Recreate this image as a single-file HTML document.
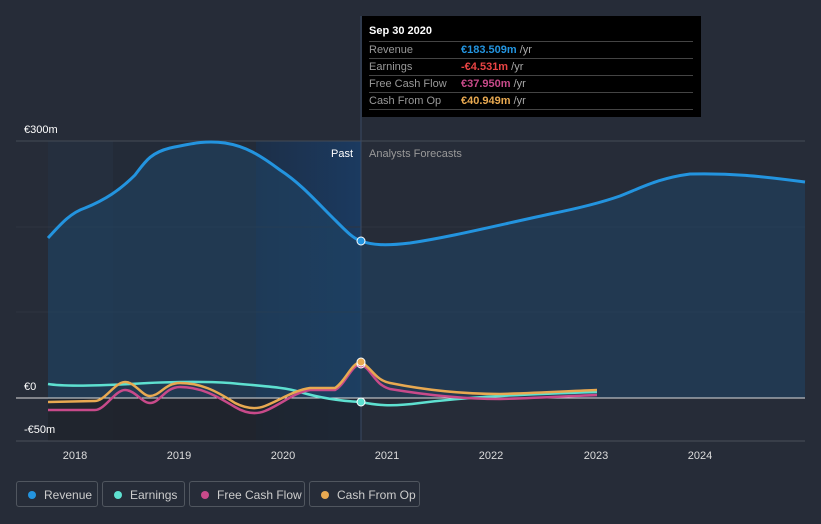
<!DOCTYPE html><html><head><style>
body{margin:0;width:821px;height:524px;background:#262c38;font-family:"Liberation Sans",sans-serif;overflow:hidden;position:relative}
.tt{position:absolute;left:362px;top:16px;width:339px;height:101px;background:#000;color:#fff;font-size:11px}
.tt .h{position:absolute;left:7px;top:9px;font-weight:bold;font-size:11px}
.row{position:absolute;left:7px;width:324px;border-top:1px solid #444;height:16px;line-height:17px;color:#999}
.row span{position:absolute;left:92px;font-weight:bold}
.row i{font-style:normal;color:#aaa;font-weight:normal}
.lg{position:absolute;top:481px;height:26px;border:1px solid #50565f;border-radius:3px;color:#ccc;font-size:12px;line-height:26px;box-sizing:border-box}
.lg b{position:absolute;left:11px;top:9px;width:8px;height:8px;border-radius:50%}
.lg span{position:absolute;left:27px}
</style></head><body>
<svg width="821" height="524" style="position:absolute;left:0;top:0" font-family="Liberation Sans" font-size="11">
<defs><linearGradient id="hb" x1="0" x2="1" y1="0" y2="0"><stop offset="0" stop-color="#1c2f48"/><stop offset="1" stop-color="#1b3a60"/></linearGradient></defs>
<rect x="48" y="141" width="208" height="300" fill="#252f3e"/>
<rect x="113" y="141" width="143" height="300" fill="#232b38"/>
<rect x="256" y="141" width="105" height="300" fill="url(#hb)"/>
<rect x="48" y="398" width="313" height="43" fill="#1f232b" opacity="0.8"/>
<line x1="16" y1="141" x2="805" y2="141" stroke="#444b56"/>
<line x1="16" y1="227" x2="805" y2="227" stroke="#2f3541"/>
<line x1="16" y1="312" x2="805" y2="312" stroke="#2f3541"/>
<line x1="16" y1="441" x2="805" y2="441" stroke="#4a505a"/>
<line x1="361" y1="16" x2="361" y2="441" stroke="#3a4a63"/>
<path d="M48,238 C60,225 70,213 85,208 C105,200 120,190 135,175 C145,162 150,153 170,148 C190,144 205,140 225,143 C245,146 260,155 280,170 C300,183 315,200 330,215 C345,230 352,238 361,241 C372,245 385,246 410,243 C450,237 490,227 550,214 C580,208 600,203 620,196 C645,186 660,178 690,174 C730,173 760,176 805,182 L805,398 L48,398Z" fill="#1f4263" opacity="0.6"/>
<path d="M48,238 C60,225 70,213 85,208 C105,200 120,190 135,175 C145,162 150,153 170,148 C190,144 205,140 225,143 C245,146 260,155 280,170 C300,183 315,200 330,215 C345,230 352,238 361,241 C372,245 385,246 410,243 C450,237 490,227 550,214 C580,208 600,203 620,196 C645,186 660,178 690,174 C730,173 760,176 805,182" fill="none" stroke="#2394df" stroke-width="3"/>
<line x1="16" y1="398" x2="805" y2="398" stroke="#ddd" stroke-width="1"/>
<path d="M48,384 C60,386 90,386 130,384 C160,382 200,381 230,383 C260,386 285,387 300,392 C320,398 340,401 361,402 C375,405 390,407 420,403 C460,398 500,395 597,392" fill="none" stroke="#5ee0d0" stroke-width="2.5"/>
<path d="M48,410 L95,410 C105,410 115,390 125,390 C135,390 142,403 150,403 C160,403 165,387 180,387 C200,387 215,395 235,407 C245,413 255,415 265,411 C280,405 295,392 310,390 L335,390 C345,385 352,364 361,364 C372,370 375,385 390,389 C420,394 460,399 500,399 C540,398 570,396 597,395" fill="none" stroke="#c84a8a" stroke-width="2.5"/>
<path d="M48,402 L95,401 C105,401 115,382 125,382 C135,382 142,396 150,396 C160,396 165,383 180,383 C200,383 215,390 235,403 C245,408 255,410 265,406 C280,400 295,390 310,388 L335,388 C345,382 352,362 361,362 C372,368 375,380 390,383 C420,389 460,394 500,394 C540,393 570,391 597,390" fill="none" stroke="#e8a951" stroke-width="2.5"/>
<circle cx="361" cy="241" r="4" fill="#2394df" stroke="#fff" stroke-width="1"/>
<circle cx="361" cy="402" r="4" fill="#5ee0d0" stroke="#fff" stroke-width="1"/>
<circle cx="361" cy="364" r="4" fill="#c84a8a" stroke="#fff" stroke-width="1"/>
<circle cx="361" cy="362" r="4" fill="#e8a951" stroke="#fff" stroke-width="1"/>
<text x="24" y="133" fill="#fff">€300m</text>
<text x="24" y="390" fill="#fff">€0</text>
<text x="24" y="433" fill="#fff">-€50m</text>
<text x="353" y="157" fill="#fff" text-anchor="end">Past</text>
<text x="369" y="157" fill="#999">Analysts Forecasts</text>
<g fill="#ddd" text-anchor="middle"><text x="75" y="459">2018</text><text x="179" y="459">2019</text><text x="283" y="459">2020</text><text x="387" y="459">2021</text><text x="491" y="459">2022</text><text x="596" y="459">2023</text><text x="700" y="459">2024</text></g>
</svg>
<div class="tt"><div class="h">Sep 30 2020</div>
<div class="row" style="top:25px">Revenue<span style="color:#2394df">€183.509m <i>/yr</i></span></div>
<div class="row" style="top:42px">Earnings<span style="color:#e84444">-€4.531m <i>/yr</i></span></div>
<div class="row" style="top:59px">Free Cash Flow<span style="color:#c84a8a">€37.950m <i>/yr</i></span></div>
<div class="row" style="top:76px">Cash From Op<span style="color:#e8a951">€40.949m <i>/yr</i></span></div>
<div class="row" style="top:93px;height:0"></div>
</div>
<div class="lg" style="left:16px;width:82px"><b style="background:#2394df"></b><span>Revenue</span></div>
<div class="lg" style="left:102px;width:83px"><b style="background:#5ee0d0"></b><span>Earnings</span></div>
<div class="lg" style="left:189px;width:116px"><b style="background:#c84a8a"></b><span>Free Cash Flow</span></div>
<div class="lg" style="left:309px;width:111px"><b style="background:#e8a951"></b><span>Cash From Op</span></div>
</body></html>
